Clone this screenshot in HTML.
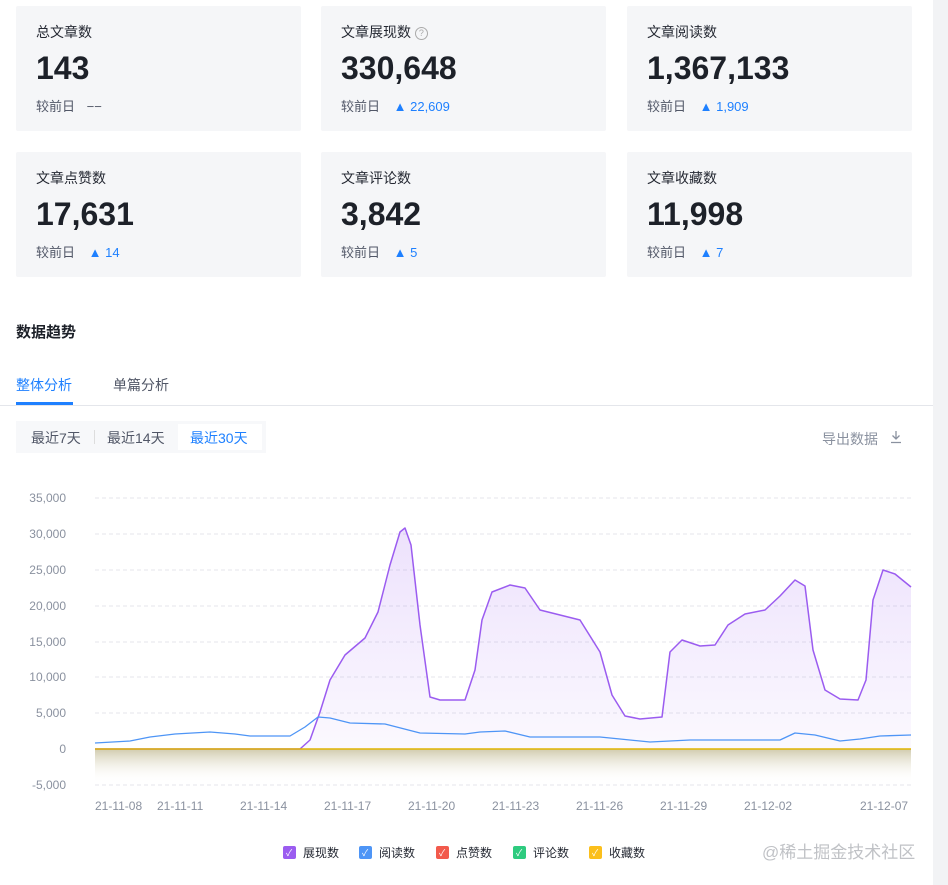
<!DOCTYPE html><html><head><meta charset="utf-8"><style>
body{margin:0;width:948px;height:885px;background:#fff;font-family:"Liberation Sans","Noto Sans CJK SC",sans-serif;position:relative;overflow:hidden}
.card{position:absolute;width:285px;height:125px;background:#f5f6f8;border-radius:2px}
.card .t{position:absolute;left:20px;top:16px;font-size:14px;color:#252933}
.card .n{position:absolute;left:20px;top:44px;font-size:32px;font-weight:bold;color:#1d2129}
.card .c{position:absolute;left:20px;top:90px;font-size:13px;color:#515767}
.card .c b{font-weight:normal;color:#1e80ff;margin-left:10px}
.a{position:absolute;font-size:14px}
.ax{position:absolute;font-size:12px;color:#8a919f}
</style></head><body>
<div style="position:absolute;right:0;top:0;width:15px;height:885px;background:#f2f3f5"></div>
<div class="card" style="left:16px;top:6px"><div class="t">总文章数</div><div class="n">143</div><div class="c">较前日 <span style="margin-left:8px;color:#515767">−−</span></div></div>
<div class="card" style="left:321px;top:6px"><div class="t">文章展现数 <span style="display:inline-block;width:11px;height:11px;border:1px solid #aaa;border-radius:50%;font-size:9px;line-height:11px;text-align:center;color:#aaa;vertical-align:1px">?</span></div><div class="n">330,648</div><div class="c">较前日 <b>▲ 22,609</b></div></div>
<div class="card" style="left:627px;top:6px"><div class="t">文章阅读数</div><div class="n">1,367,133</div><div class="c">较前日 <b>▲ 1,909</b></div></div>
<div class="card" style="left:16px;top:152px"><div class="t">文章点赞数</div><div class="n">17,631</div><div class="c">较前日 <b>▲ 14</b></div></div>
<div class="card" style="left:321px;top:152px"><div class="t">文章评论数</div><div class="n">3,842</div><div class="c">较前日 <b>▲ 5</b></div></div>
<div class="card" style="left:627px;top:152px"><div class="t">文章收藏数</div><div class="n">11,998</div><div class="c">较前日 <b>▲ 7</b></div></div>
<div class="a" style="left:16px;top:321px;font-size:15px;font-weight:bold;color:#1d2129">数据趋势</div>
<div class="a" style="left:16px;top:375px;color:#1e80ff">整体分析</div>
<div style="position:absolute;left:16px;top:402px;width:57px;height:3px;background:#1e80ff"></div>
<div class="a" style="left:113px;top:375px;color:#515767">单篇分析</div>
<div style="position:absolute;left:0;top:405px;width:933px;height:1px;background:#e4e6eb"></div>
<div style="position:absolute;left:16px;top:421px;width:250px;height:32px;background:#f7f8fa"></div>
<div style="position:absolute;left:178px;top:424px;width:84px;height:26px;background:#fff"></div>
<div style="position:absolute;left:94px;top:430px;width:1px;height:14px;background:#ddd"></div>
<div class="a" style="left:31px;top:428px;color:#515767">最近7天</div>
<div class="a" style="left:107px;top:428px;color:#515767">最近14天</div>
<div class="a" style="left:190px;top:428px;color:#1e80ff">最近30天</div>
<div class="a" style="left:822px;top:429px;color:#8a919f">导出数据</div>
<svg style="position:absolute;left:889px;top:430px" width="14" height="14"><path d="M7 1V9M3.5 5.5L7 9 10.5 5.5M2 12.5H12" stroke="#8a919f" stroke-width="1.3" fill="none"/></svg>
<div class="ax" style="left:0;width:66px;text-align:right;top:491px">35,000</div>
<div class="ax" style="left:0;width:66px;text-align:right;top:527px">30,000</div>
<div class="ax" style="left:0;width:66px;text-align:right;top:563px">25,000</div>
<div class="ax" style="left:0;width:66px;text-align:right;top:599px">20,000</div>
<div class="ax" style="left:0;width:66px;text-align:right;top:635px">15,000</div>
<div class="ax" style="left:0;width:66px;text-align:right;top:670px">10,000</div>
<div class="ax" style="left:0;width:66px;text-align:right;top:706px">5,000</div>
<div class="ax" style="left:0;width:66px;text-align:right;top:742px">0</div>
<div class="ax" style="left:0;width:66px;text-align:right;top:778px">-5,000</div>
<svg style="position:absolute;left:0;top:0" width="948" height="885">
<defs><linearGradient id="pg" x1="0" y1="0" x2="0" y2="1"><stop offset="0" stop-color="#9b5cf0" stop-opacity=".18"/><stop offset="1" stop-color="#9b5cf0" stop-opacity=".04"/></linearGradient>
<linearGradient id="yg" x1="0" y1="0" x2="0" y2="1"><stop offset="0" stop-color="#bdb58a" stop-opacity=".7"/><stop offset="1" stop-color="#fff" stop-opacity="0"/></linearGradient></defs>
<g stroke="#e4e6eb" stroke-dasharray="4 3">
<line x1="95" x2="911" y1="498" y2="498"/><line x1="95" x2="911" y1="534" y2="534"/><line x1="95" x2="911" y1="570" y2="570"/><line x1="95" x2="911" y1="606" y2="606"/><line x1="95" x2="911" y1="642" y2="642"/><line x1="95" x2="911" y1="677" y2="677"/><line x1="95" x2="911" y1="713" y2="713"/><line x1="95" x2="911" y1="785" y2="785"/></g>
<rect x="95" y="749" width="816" height="34" fill="url(#yg)"/>
<path d="M95,749 L300,749 310,740 320,712 330,680 345,655 365,638 378,612 390,565 400,532 405,528 411,545 420,625 430,697 440,700 465,700 475,670 482,620 492,592 510,585 525,588 540,610 560,615 580,620 600,652 612,695 625,716 640,719 662,717 670,652 682,640 700,646 715,645 728,625 745,614 765,610 780,596 795,580 805,586 813,650 825,690 840,699 858,700 866,680 873,600 883,570 895,574 911,587 L911,749 Z" fill="url(#pg)" stroke="none"/>
<path d="M95,749 L300,749 310,740 320,712 330,680 345,655 365,638 378,612 390,565 400,532 405,528 411,545 420,625 430,697 440,700 465,700 475,670 482,620 492,592 510,585 525,588 540,610 560,615 580,620 600,652 612,695 625,716 640,719 662,717 670,652 682,640 700,646 715,645 728,625 745,614 765,610 780,596 795,580 805,586 813,650 825,690 840,699 858,700 866,680 873,600 883,570 895,574 911,587" fill="none" stroke="#9b5cf0" stroke-width="1.5" stroke-linejoin="round"/>
<path d="M95,743 L130,741 150,737 175,734 210,732 235,734 250,736 290,736 305,727 318,717 330,718 350,723 385,724 420,733 465,734 480,732 505,731 530,737 600,737 620,739 650,742 670,741 690,740 780,740 795,733 815,735 840,741 860,739 880,736 911,735" fill="none" stroke="#4e95f6" stroke-width="1.3" stroke-linejoin="round"/>
<line x1="95" x2="911" y1="749" y2="749" stroke="#e0b400" stroke-width="1.5"/>
<g font-size="12" fill="#8a919f" font-family="Liberation Sans,sans-serif">
<text x="95" y="810">21-11-08</text><text x="157" y="810">21-11-11</text><text x="240" y="810">21-11-14</text><text x="324" y="810">21-11-17</text><text x="408" y="810">21-11-20</text><text x="492" y="810">21-11-23</text><text x="576" y="810">21-11-26</text><text x="660" y="810">21-11-29</text><text x="744" y="810">21-12-02</text><text x="860" y="810">21-12-07</text></g>
<g font-size="12" fill="#252933" font-family="Liberation Sans,Noto Sans CJK SC,sans-serif">
<rect x="283" y="846" width="13" height="13" rx="2" fill="#9b5cf0"/><text x="303" y="857">展现数</text>
<rect x="359" y="846" width="13" height="13" rx="2" fill="#4e95f6"/><text x="379" y="857">阅读数</text>
<rect x="436" y="846" width="13" height="13" rx="2" fill="#f25a4c"/><text x="456" y="857">点赞数</text>
<rect x="513" y="846" width="13" height="13" rx="2" fill="#2ecb7f"/><text x="533" y="857">评论数</text>
<rect x="589" y="846" width="13" height="13" rx="2" fill="#fbbf1c"/><text x="609" y="857">收藏数</text>
<g fill="#fff" font-size="9"><text x="286" y="856">✓</text><text x="362" y="856">✓</text><text x="439" y="856">✓</text><text x="516" y="856">✓</text><text x="592" y="856">✓</text></g>
<text x="762" y="858" font-size="17" fill="#c0c2c6">@稀土掘金技术社区</text></g>
</svg>
</body></html>
